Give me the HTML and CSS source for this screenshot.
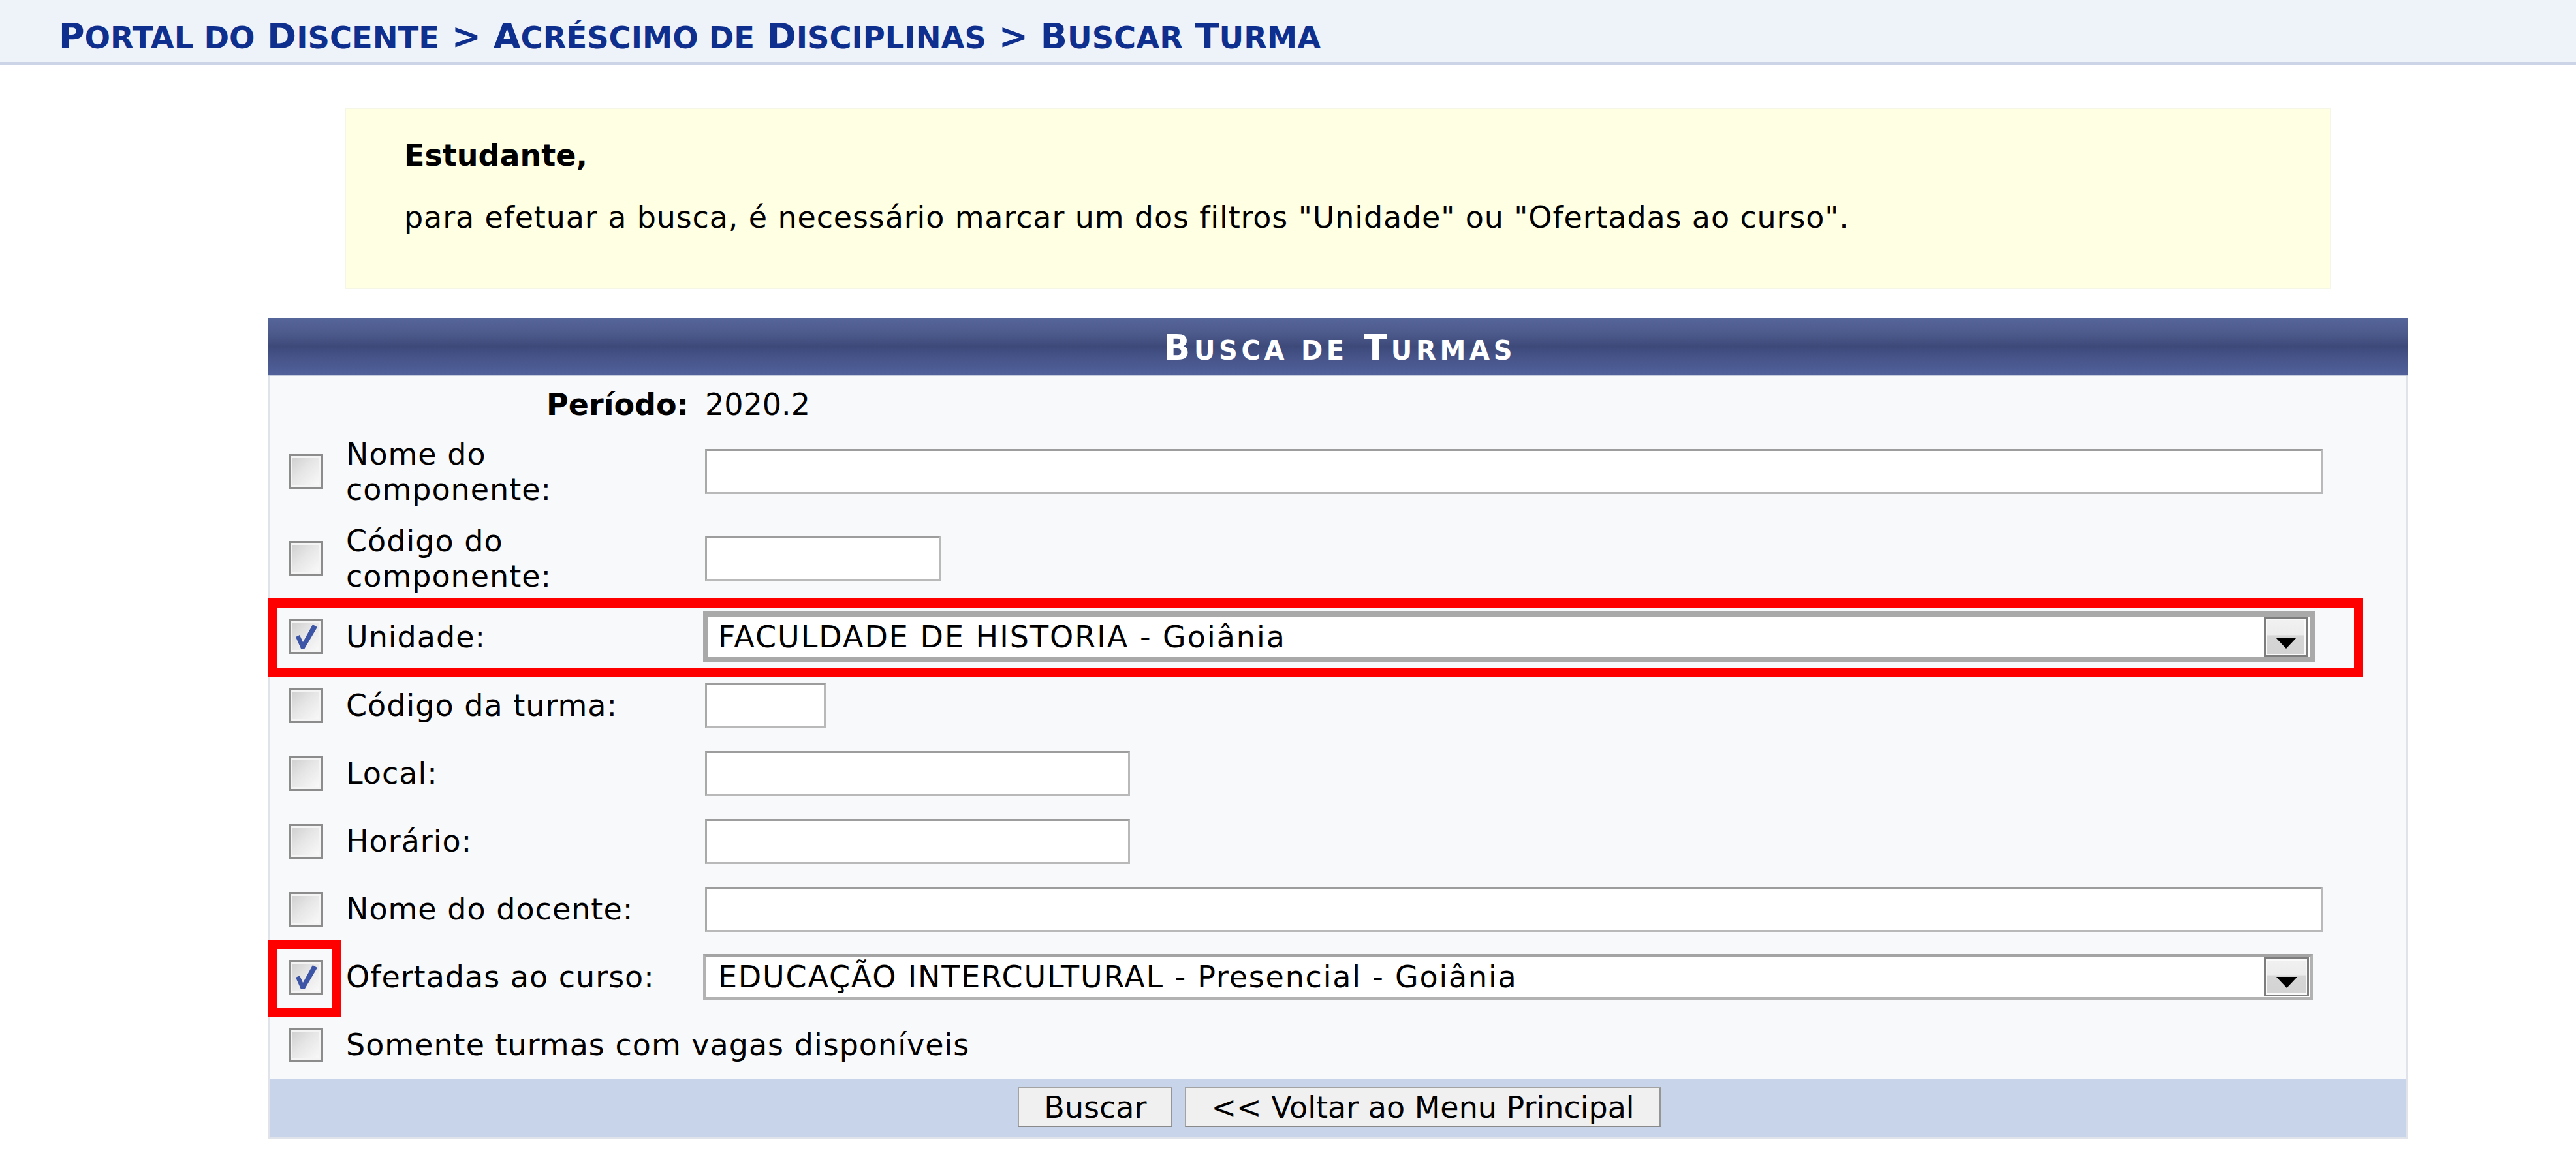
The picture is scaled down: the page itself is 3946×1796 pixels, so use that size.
FILE: index.html
```html
<!DOCTYPE html>
<html lang="pt-BR">
<head>
<meta charset="utf-8">
<title>Buscar Turma</title>
<link rel="stylesheet" href="styles.css">
</head>
<body>
<div class="topbar">
  <h2 class="crumbs">P<small>ortal do</small> D<small>iscente</small> &gt; A<small>créscimo de</small> D<small>isciplinas</small> &gt; B<small>uscar</small> T<small>urma</small></h2>
</div>

<div class="page">
  <div class="notice">
    <p class="who">Estudante,</p>
    <p class="msg">para efetuar a busca, é necessário marcar um dos filtros "Unidade" ou "Ofertadas ao curso".</p>
  </div>

  <div class="panel">
    <div class="panel-head">B<small>usca de</small> T<small>urmas</small></div>
    <div class="panel-body">
      <div class="row r-period">
        <span class="plabel">Período:</span>
        <span class="pvalue">2020.2</span>
      </div>

      <div class="row r-two">
        <span class="cell-cb"><span class="cb"></span></span>
        <span class="lbl">Nome do componente:</span>
        <span class="fld"><input class="txt w-long" type="text"></span>
      </div>

      <div class="row r-two">
        <span class="cell-cb"><span class="cb"></span></span>
        <span class="lbl">Código do componente:</span>
        <span class="fld"><input class="txt w-code" type="text"></span>
      </div>

      <div class="row r-sel">
        <span class="cell-cb"><span class="cb"><svg viewBox="0 0 47 47"><path d="M8 24 L14 21 L19 32 L34 5 L41 9 L21.5 42 L16 42 Z" fill="#3d55a6"/></svg></span></span>
        <span class="lbl">Unidade:</span>
        <span class="fld"><span class="select sel-focus"><span class="val">FACULDADE DE HISTORIA - Goiânia</span><span class="arrow"><span class="tri"></span></span></span></span>
        <span class="mark mark-wide"></span>
      </div>

      <div class="row">
        <span class="cell-cb"><span class="cb"></span></span>
        <span class="lbl">Código da turma:</span>
        <span class="fld"><input class="txt w-turma" type="text"></span>
      </div>

      <div class="row">
        <span class="cell-cb"><span class="cb"></span></span>
        <span class="lbl">Local:</span>
        <span class="fld"><input class="txt w-local" type="text"></span>
      </div>

      <div class="row">
        <span class="cell-cb"><span class="cb"></span></span>
        <span class="lbl">Horário:</span>
        <span class="fld"><input class="txt w-local" type="text"></span>
      </div>

      <div class="row">
        <span class="cell-cb"><span class="cb"></span></span>
        <span class="lbl">Nome do docente:</span>
        <span class="fld"><input class="txt w-long" type="text"></span>
      </div>

      <div class="row">
        <span class="cell-cb"><span class="cb"><svg viewBox="0 0 47 47"><path d="M8 24 L14 21 L19 32 L34 5 L41 9 L21.5 42 L16 42 Z" fill="#3d55a6"/></svg></span></span>
        <span class="lbl">Ofertadas ao curso:</span>
        <span class="fld"><span class="select"><span class="val">EDUCAÇÃO INTERCULTURAL - Presencial - Goiânia</span><span class="arrow"><span class="tri"></span></span></span></span>
        <span class="mark mark-small"></span>
      </div>

      <div class="row">
        <span class="cell-cb"><span class="cb"></span></span>
        <span class="lbl lbl-span">Somente turmas com vagas disponíveis</span>
      </div>
    </div>
    <div class="panel-foot">
      <button class="btn" type="button">Buscar</button>
      <button class="btn" type="button">&lt;&lt; Voltar ao Menu Principal</button>
    </div>
  </div>
</div>
</body>
</html>
```

FILE: styles.css
```css
* {
  box-sizing: border-box;
}

html,
body {
  margin: 0;
  padding: 0;
  background: #ffffff;
}

body {
  width: 3946px;
  font-family: "DejaVu Sans", Verdana, sans-serif;
  font-size: 46px;
  color: #000000;
}

/* top breadcrumb bar */
.topbar {
  height: 99px;
  padding: 29px 0 0 90px;
  background: #eef2f9;
  border-bottom: 4px solid #cbd5e7;
}

.crumbs {
  margin: 0;
  font-size: 54px;
  line-height: 1;
  font-weight: bold;
  color: #0f2f8e;
  white-space: nowrap;
}

.crumbs small {
  font-size: 0.86em;
  text-transform: uppercase;
}

/* content column */
.page {
  margin-left: 410px;
  width: 3279px;
}

.notice {
  width: 3041px;
  height: 277px;
  margin: 67px auto 0;
  padding: 44px 89px 0;
  background: #ffffe4;
  border: 1px solid #f6f6e6;
}

.notice p {
  margin: 0;
  line-height: normal;
}

.notice p + p {
  margin-top: 41px;
}

.notice .who {
  font-weight: bold;
}

.notice .msg {
  letter-spacing: 0.87px;
}

/* form panel */
.panel {
  margin-top: 45px;
}

.panel-head {
  height: 88px;
  padding-top: 18px;
  padding-left: 6px;
  background: linear-gradient(#56659a 0%, #4a5889 30%, #3d4979 50%, #46548a 70%, #52609a 100%);
  border-bottom: 2px solid #c4cbdc;
  color: #ffffff;
  text-align: center;
  font-size: 53px;
  line-height: 1;
  font-weight: bold;
  letter-spacing: 5.7px;
  white-space: nowrap;
}

.panel-head small {
  font-size: 0.755em;
  text-transform: uppercase;
}

.panel-body {
  padding-top: 8px;
  background: #f8f9fb;
  border-left: 3px solid #e0e3ea;
  border-right: 3px solid #e0e3ea;
}

.row {
  position: relative;
  display: grid;
  grid-template-columns: 117px 550px 1fr;
  align-items: center;
  height: 104px;
  line-height: normal;
}

.r-period {
  height: 72px;
}

.r-two {
  height: 133px;
}

.r-sel {
  height: 107px;
}

.plabel {
  grid-column: 1 / 3;
  padding-right: 25px;
  text-align: right;
  font-weight: bold;
}

.pvalue {
  grid-column: 3;
}

.cell-cb {
  display: flex;
  align-items: center;
  padding-left: 29px;
}

.cb {
  display: block;
  width: 53px;
  height: 53px;
  border: 3px solid #8c8c8c;
  background: linear-gradient(135deg, #cdcdcd 0%, #e6e6e6 45%, #fbfbfb 100%);
  box-shadow: inset 0 0 0 3px #f4f4f4;
}

.cb svg {
  display: block;
  width: 47px;
  height: 47px;
}

.lbl {
  padding-right: 40px;
  letter-spacing: 1px;
}

.lbl-span {
  grid-column: 2 / 4;
}

.fld {
  display: flex;
  align-items: center;
}

.txt {
  display: block;
  height: 69px;
  margin: 0;
  padding: 0 12px;
  background: #ffffff;
  border: 3px solid #b9b9b9;
  border-top-color: #9d9d9d;
  border-left-color: #a9a9a9;
  font: inherit;
}

.w-long {
  width: 2478px;
}

.w-code {
  width: 361px;
}

.w-turma {
  width: 185px;
}

.w-local {
  width: 651px;
}

/* drop-down lists */
.select {
  display: flex;
  align-items: center;
  width: 2466px;
  height: 70px;
  margin-left: -3px;
  background: #ffffff;
  border: 4px solid #b2b2b2;
  border-top-color: #a4a4a4;
}

.sel-focus {
  width: 2469px;
  height: 78px;
  border: 8px solid #a9a9a9;
}

.select .val {
  flex: 1;
  padding-left: 19px;
  white-space: nowrap;
  letter-spacing: 1.8px;
}

.sel-focus .val {
  padding-left: 15px;
  letter-spacing: 2px;
}

.arrow {
  display: flex;
  align-items: flex-end;
  justify-content: center;
  width: 69px;
  height: 60px;
  margin-right: 2px;
  padding-bottom: 10px;
  border: 3px solid #7d7d7d;
  background: linear-gradient(#f1f1f1 0%, #ececec 45%, #d6d6d6 46%, #d3d3d3 100%);
  box-shadow: inset 0 0 0 2px #fafafa;
}

.sel-focus .arrow {
  width: 67px;
  height: 62px;
  margin-right: 3px;
}

.tri {
  width: 0;
  height: 0;
  border-left: 16px solid transparent;
  border-right: 16px solid transparent;
  border-top: 17px solid #000000;
}

/* red annotation frames */
.mark {
  position: absolute;
  left: -3px;
  top: -5px;
  border: 14px solid #ff0000;
  pointer-events: none;
}

.mark-wide {
  width: 3210px;
  height: 120px;
}

.mark-small {
  width: 112px;
  height: 118px;
}

/* footer buttons */
.panel-foot {
  display: flex;
  justify-content: center;
  align-items: center;
  gap: 19px;
  height: 93px;
  padding-bottom: 3px;
  padding-left: 4px;
  background: #c8d4ea;
  border: 3px solid #e0e3ea;
  border-top: 0;
}

.btn {
  height: 61px;
  margin: 0;
  padding: 0 38px;
  background: #f0f0f0;
  border: 2px solid #a3a3a3;
  border-bottom-color: #8a8a8a;
  border-right-color: #959595;
  font-family: "DejaVu Sans", Verdana, sans-serif;
  font-size: 46px;
  line-height: 1;
  color: #000000;
}
```
